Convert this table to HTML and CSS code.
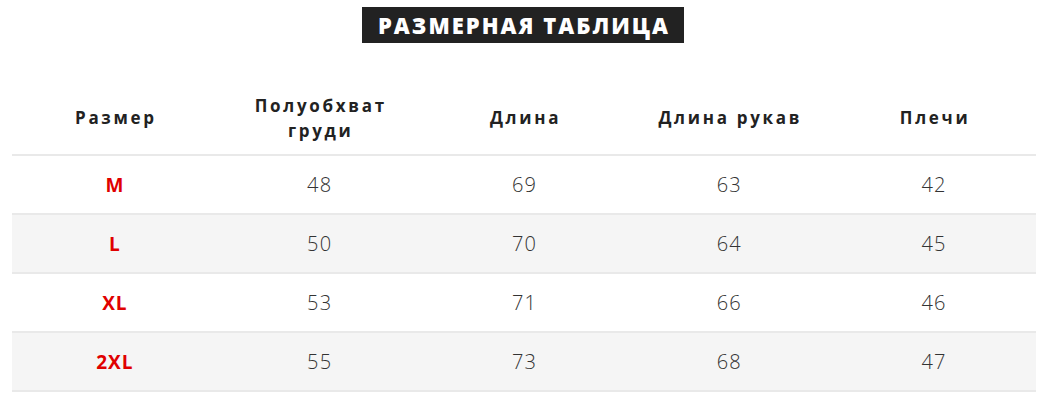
FILE: index.html
```html
<!DOCTYPE html>
<html lang="ru">
<head>
<meta charset="utf-8">
<link rel="stylesheet" href="styles.css">
</head>
<body>
<div class="title-wrap"><h1 class="title">РАЗМЕРНАЯ ТАБЛИЦА</h1></div>
<table class="sizes">
  <thead>
    <tr><th>Размер</th><th>Полуобхват<br>груди</th><th>Длина</th><th>Длина рукав</th><th>Плечи</th></tr>
  </thead>
  <tbody>
    <tr><td class="size">M</td><td>48</td><td>69</td><td>63</td><td>42</td></tr>
    <tr class="alt"><td class="size">L</td><td>50</td><td>70</td><td>64</td><td>45</td></tr>
    <tr><td class="size">XL</td><td>53</td><td>71</td><td>66</td><td>46</td></tr>
    <tr class="alt"><td class="size">2XL</td><td>55</td><td>73</td><td>68</td><td>47</td></tr>
  </tbody>
</table>
</body>
</html>
```
FILE: styles.css
```css
html, body { margin: 0; padding: 0; background: #fff; }
body { font-family: "Open Sans", "Liberation Sans", sans-serif; color: #222; }
.title-wrap { text-align: center; padding-top: 7px; }
.title {
  display: inline-block; margin: 0; background: #222; color: #fff;
  font-size: 22px; font-weight: 800; letter-spacing: 2px;
  height: 36px; line-height: 36px; padding: 0 14px 0 16px; box-sizing: border-box;
}
.sizes {
  margin: 38px 10px 0 12px; width: 1024px; border-collapse: collapse;
  table-layout: fixed;
}
.sizes th {
  height: 73px; padding: 0 0 0 3px; font-size: 17px; font-weight: 700;
  letter-spacing: 2.7px; line-height: 25px; color: #222;
  border-bottom: 2px solid #e9e9e9; vertical-align: middle;
}
.sizes td {
  height: 57px; padding: 0 0 0 1px; text-align: center; font-size: 20px; font-weight: 300;
  letter-spacing: 1.2px; color: #333; border-bottom: 2px solid #e9e9e9;
}
.sizes tr.alt td { background: #f5f5f5; }
.sizes td.size { color: #e00000; font-weight: 700; font-size: 19px; letter-spacing: 1px; }
```
